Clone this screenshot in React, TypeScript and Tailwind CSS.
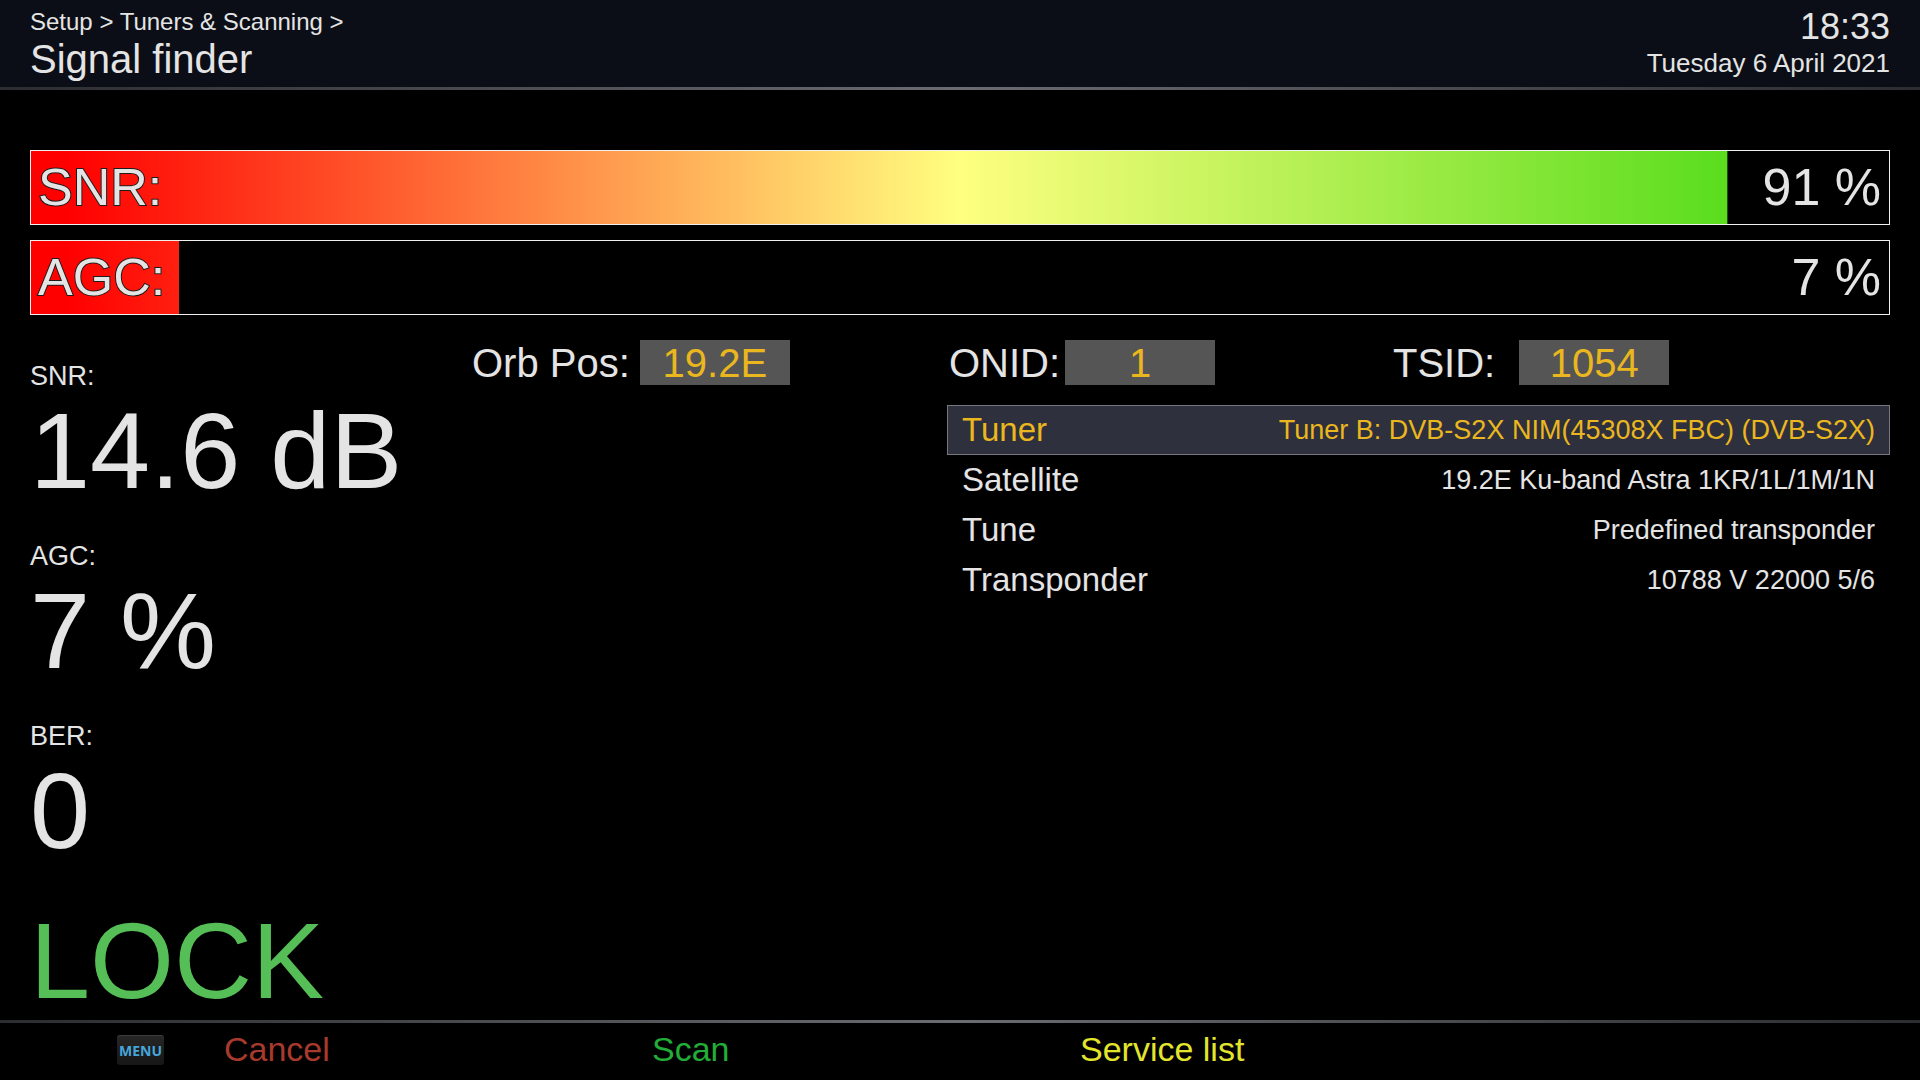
const meters = [
  { label: "SNR:", value: "91 %", fill: 91.3 },
  { label: "AGC:", value: "7 %", fill: 7.96 },
];

const readings = [
  { label: "SNR:", value: "14.6 dB" },
  { label: "AGC:", value: "7 %" },
  { label: "BER:", value: "0" },
];

const settings = [
  { name: "Tuner", value: "Tuner B: DVB-S2X NIM(45308X FBC) (DVB-S2X)" },
  { name: "Satellite", value: "19.2E Ku-band Astra 1KR/1L/1M/1N" },
  { name: "Tune", value: "Predefined transponder" },
  { name: "Transponder", value: "10788 V 22000 5/6" },
];

function Rule() {
  return (
    <div className="h-[3px] bg-linear-to-r from-[#2c2d30] via-[#6b6c72] to-[#2c2d30]" />
  );
}

function Header() {
  return (
    <header className="bg-[#0b0e16]">
      <div className="flex h-[87px] items-start justify-between px-[30px] pt-2">
        <div>
          <nav className="text-[24px] leading-7">Setup &gt; Tuners &amp; Scanning &gt;</nav>
          <h1 className="text-[40px] leading-[46px]">Signal finder</h1>
        </div>
        <div className="text-right">
          <div className="text-[36px] leading-[38px]">18:33</div>
          <div className="text-[26px] leading-[34px]">Tuesday 6 April 2021</div>
        </div>
      </div>
      <Rule />
    </header>
  );
}

function Meter({ label, value, fill }: { label: string; value: string; fill: number }) {
  return (
    <div className="relative flex h-[75px] justify-between border border-[#f0f0f0] pr-2 pl-[7px] text-[52px] leading-[72px]">
      <div
        className="absolute inset-0 bg-[linear-gradient(to_right,#ff0000_0%,#ff0000_2%,#ffff80_50%,#37d609_100%)]"
        style={{ clipPath: `inset(0 ${100 - fill}% 0 0)` }}
      />
      <span className="relative [paint-order:stroke_fill] [-webkit-text-stroke:2px_#1c1c1c]">{label}</span>
      <span className="relative">{value}</span>
    </div>
  );
}

function Field({ label, value, gap }: { label: string; value: string; gap: string }) {
  return (
    <div className={`flex h-[45px] text-[40px] leading-[47px] ${gap}`}>
      <span>{label}</span>
      <span className="w-[150px] bg-[#555555] text-center text-[#eab71e]">{value}</span>
    </div>
  );
}

function Settings() {
  return (
    <table className="mt-5 w-full border-collapse">
      <tbody>
        {settings.map((s, i) => (
          <tr
            key={s.name}
            className={
              i === 0
                ? "h-[50px] bg-[#2f303d] text-[#eab71e] shadow-[inset_0_0_0_1px_#77787f]"
                : "h-[50px]"
            }
          >
            <th scope="row" className="p-0 pl-[15px] text-left text-[33px] leading-[50px] font-normal">
              {s.name}
            </th>
            <td className="p-0 pr-[15px] text-right text-[27px] leading-[50px]">{s.value}</td>
          </tr>
        ))}
      </tbody>
    </table>
  );
}

function Footer() {
  return (
    <footer>
      <Rule />
      <div className="grid h-[57px] grid-cols-[117fr_107fr_428fr_428fr_840fr] items-start text-[34px] leading-[53px]">
        <button
          type="button"
          className="col-start-2 mt-3 h-[30px] w-[47px] rounded-[3px] border-t border-[#3c3c3c] bg-linear-to-b from-[#262626] to-[#161616] text-center font-['Noto_Sans',sans-serif] text-[14px] leading-[27px] font-bold text-[#46a6dc]"
        >
          MENU
        </button>
        <button type="button" className="justify-self-start text-[#a83a2c]">Cancel</button>
        <button type="button" className="justify-self-start text-[#22ac38]">Scan</button>
        <button type="button" className="justify-self-start text-[#e3e52c]">Service list</button>
      </div>
    </footer>
  );
}

export default function App() {
  return (
    <div className="flex min-h-screen flex-col bg-black font-['Liberation_Sans',Arial,sans-serif] text-[#e4e4e4]">
      <Header />
      <main className="flex-1 px-[30px] pt-[60px]">
        <section className="flex flex-col gap-[15px]">
          {meters.map((m) => (
            <Meter key={m.label} {...m} />
          ))}
        </section>
        <div className="grid grid-cols-[442fr_475fr_943fr]">
          <section className="pt-[45px]">
            {readings.map((r) => (
              <div key={r.label} className="h-[180px]">
                <div className="text-[27px] leading-8">{r.label}</div>
                <div className="text-[108px] leading-[118px]">{r.value}</div>
              </div>
            ))}
            <div className="h-[120px] text-[108px] leading-[122px] text-[#56be56]">LOCK</div>
          </section>
          <section className="pt-[25px]">
            <Field label="Orb Pos:" value="19.2E" gap="gap-2.5" />
          </section>
          <section className="pt-[25px]">
            <div className="grid grid-cols-[444fr_497fr] pl-0.5">
              <Field label="ONID:" value="1" gap="gap-[5px]" />
              <Field label="TSID:" value="1054" gap="gap-6" />
            </div>
            <Settings />
          </section>
        </div>
      </main>
      <Footer />
    </div>
  );
}
